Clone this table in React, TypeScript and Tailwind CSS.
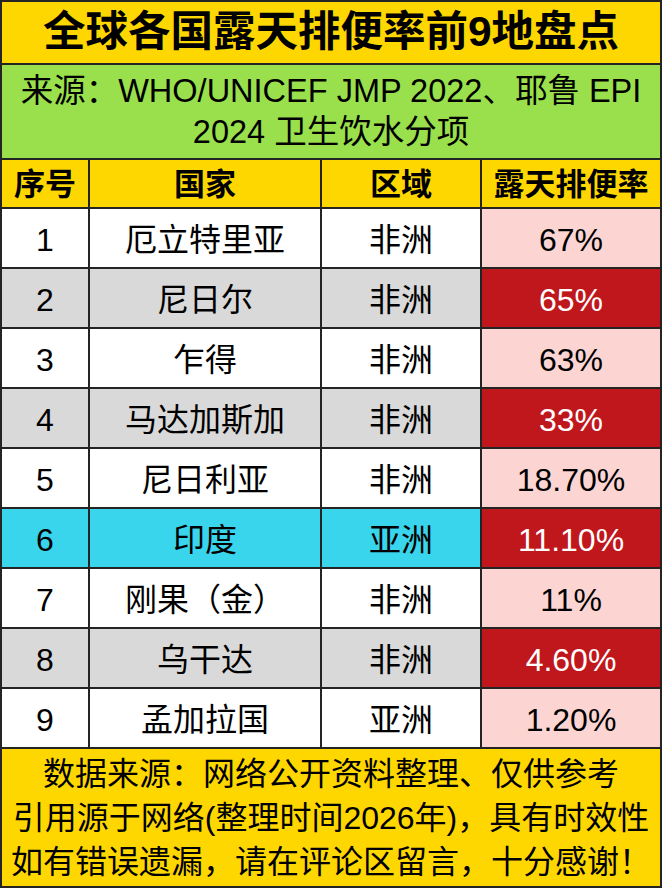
import React from "react";

const rows = [
  { n: "1", c: "厄立特里亚", r: "非洲", v: "67%", bg: "bg-white", dark: false },
  { n: "2", c: "尼日尔", r: "非洲", v: "65%", bg: "bg-[#d9d9d9]", dark: true },
  { n: "3", c: "乍得", r: "非洲", v: "63%", bg: "bg-white", dark: false },
  { n: "4", c: "马达加斯加", r: "非洲", v: "33%", bg: "bg-[#d9d9d9]", dark: true },
  { n: "5", c: "尼日利亚", r: "非洲", v: "18.70%", bg: "bg-white", dark: false },
  { n: "6", c: "印度", r: "亚洲", v: "11.10%", bg: "bg-[#38d5ed]", dark: true },
  { n: "7", c: "刚果（金）", r: "非洲", v: "11%", bg: "bg-white", dark: false },
  { n: "8", c: "乌干达", r: "非洲", v: "4.60%", bg: "bg-[#d9d9d9]", dark: true },
  { n: "9", c: "孟加拉国", r: "亚洲", v: "1.20%", bg: "bg-white", dark: false },
];

export default function App() {
  return (
    <div
      className="w-[662px] h-[888px] bg-[#242424] p-[2px] grid grid-cols-[86px_230px_158px_178px] grid-rows-[61px_93px_47px_repeat(9,58px)_137px] gap-[2px] text-black"
      style={{ fontFamily: '"Liberation Sans", "Noto Sans CJK SC", sans-serif' }}
    >
      <div className="col-span-4 bg-[#ffd700] flex items-center justify-center text-[42.5px] font-bold leading-none">
        全球各国露天排便率前9地盘点
      </div>
      <div className="col-span-4 bg-[#9ae04c] flex items-center justify-center text-center text-[32.5px] leading-[41px]">
        <div>
          来源：WHO/UNICEF JMP 2022、耶鲁 EPI
          <br />
          2024 卫生饮水分项
        </div>
      </div>
      {["序号", "国家", "区域", "露天排便率"].map((h) => (
        <div key={h} className="bg-[#ffd700] flex items-center justify-center text-[31px] font-bold leading-none pt-[2px]">
          {h}
        </div>
      ))}
      {rows.map((row) => (
        <React.Fragment key={row.n}>
          <div className={`${row.bg} flex items-center justify-center text-[32px] leading-none pt-[3px]`}>{row.n}</div>
          <div className={`${row.bg} flex items-center justify-center text-[32px] leading-none pt-[3px]`}>{row.c}</div>
          <div className={`${row.bg} flex items-center justify-center text-[32px] leading-none pt-[3px]`}>{row.r}</div>
          <div
            className={`${row.dark ? "bg-[#c0171c] text-white" : "bg-[#fcd5d2] text-black"} flex items-center justify-center text-[32px] leading-none pt-[3px]`}
          >
            {row.v}
          </div>
        </React.Fragment>
      ))}
      <div className="col-span-4 bg-[#ffd700] flex items-center justify-center text-center text-[32px] leading-[44px]">
        <div>
          数据来源：网络公开资料整理、仅供参考
          <br />
          引用源于网络(整理时间2026年)，具有时效性
          <br />
          如有错误遗漏，请在评论区留言，十分感谢！
        </div>
      </div>
    </div>
  );
}
